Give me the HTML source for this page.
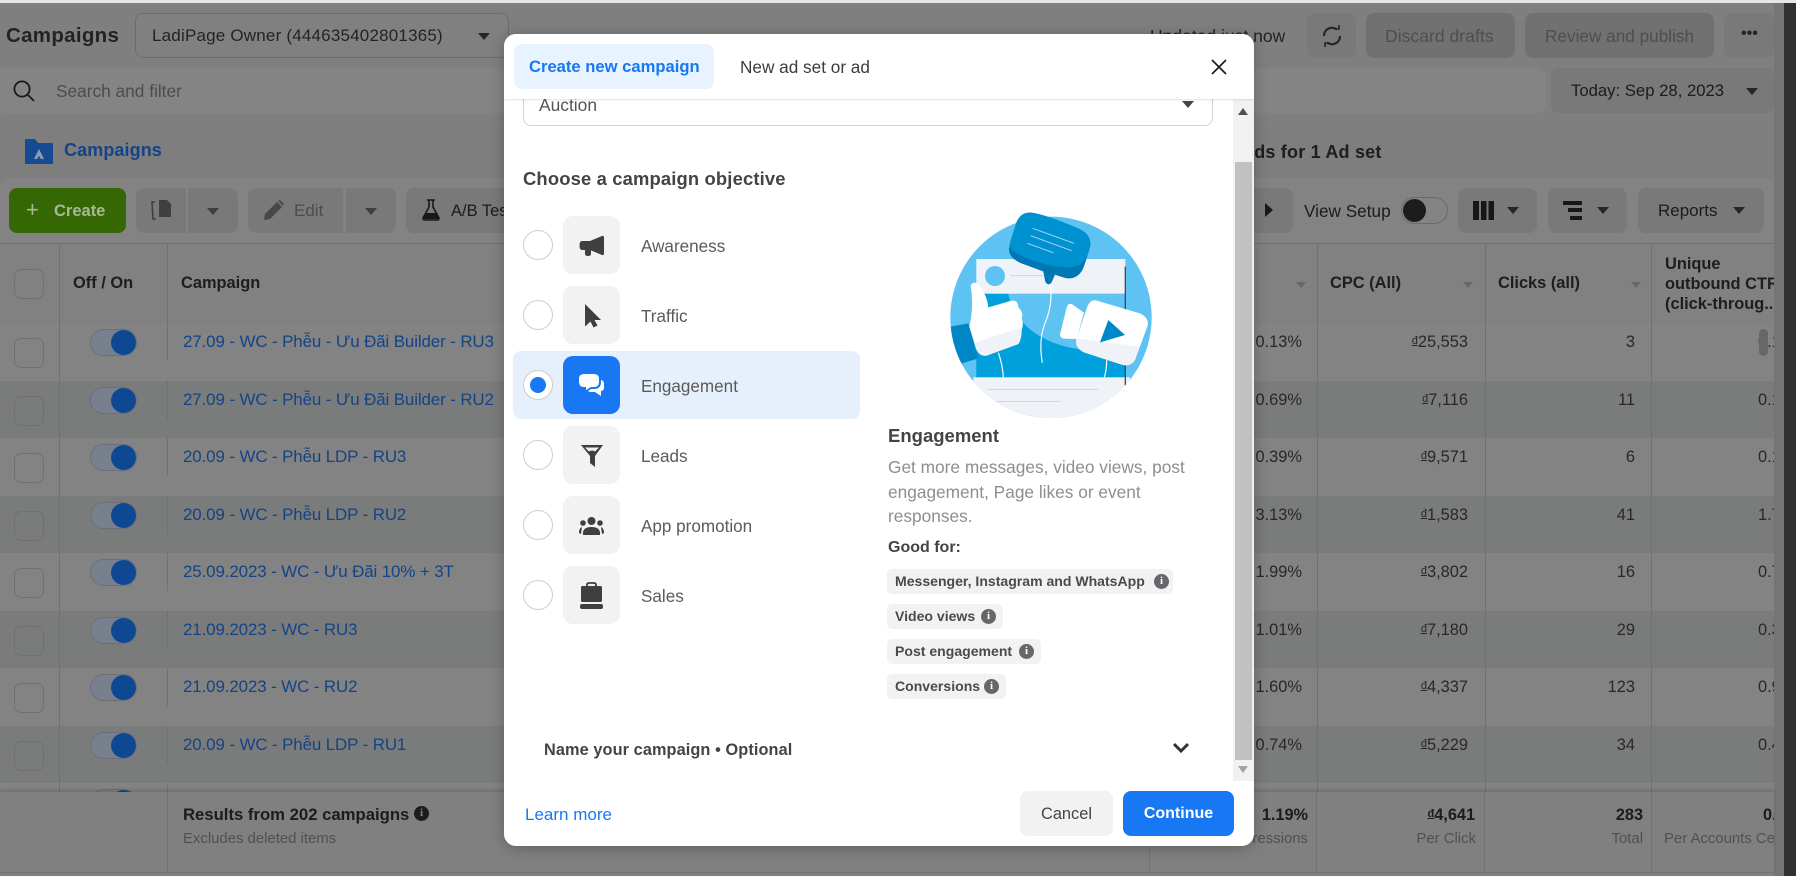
<!DOCTYPE html>
<html><head><meta charset="utf-8"><style>
*{box-sizing:border-box}
html,body{margin:0;padding:0;width:1796px;height:876px;overflow:hidden;background:#969696;font-family:"Liberation Sans","Noto Sans CJK SC",sans-serif}
.t{position:absolute;white-space:nowrap;line-height:20px;height:20px}
.b{position:absolute;border-radius:8px;background:#8f8f8f}
.v{position:absolute;width:1px;background:#858585}
.h{position:absolute;height:1px;background:#858585}
.row{position:absolute;left:0;width:1774px;height:58px;overflow:hidden;font-size:16.4px;color:#2f2f2f}
.l{background:#999a99}.k{background:#909291}
.cb{position:absolute;left:14px;top:15px;width:30px;height:30px;border:1px solid #848484;border-radius:7px}
.tg{position:absolute;left:90px;top:6px;width:47px;height:27px;border-radius:14px;background:#8d97a6;border:1px solid #7c8490}
.tg i{position:absolute;right:0;top:0;width:25px;height:25px;border-radius:50%;background:#1155ad}
.rv{position:absolute;left:167px;top:0;width:1px;height:38px;background:#858585}
.lk{position:absolute;left:183px;top:9px;line-height:20px;font-size:16.9px;color:#184f9e;letter-spacing:-.1px;white-space:nowrap}
.p{position:absolute;right:472px;top:9px;line-height:20px}
.c{position:absolute;right:306px;top:9px;line-height:20px}
.n{position:absolute;right:139px;top:9px;line-height:20px}
.u{position:absolute;left:1758px;top:9px;line-height:20px}
.d{font-size:11px;vertical-align:3px;text-decoration:underline;line-height:0}
.modal{position:absolute;left:504px;top:34px;width:750px;height:812px;background:#fff;border-radius:12px;box-shadow:0 2px 14px rgba(0,0,0,.25);overflow:hidden}
.m{position:absolute;white-space:nowrap;line-height:20px;height:20px}
.radio{position:absolute;left:19px;width:30px;height:30px;border-radius:50%;border:1px solid #cdcdcd;background:#fff}
.tile{position:absolute;left:59px;width:57px;height:58px;border-radius:10px;background:#f2f2f2}
.lab{position:absolute;left:137px;font-size:17.1px;line-height:20px;color:#5b5b5b;height:20px}
.chip{position:absolute;left:383px;height:25px;border-radius:5px;background:#f2f2f2;font-size:14.05px;font-weight:bold;color:#4a4a4a;line-height:25px;padding-left:8px;white-space:nowrap}
.inf{position:absolute;top:5px;width:15px;height:15px;border-radius:50%;background:#65676b;color:#fff;font:bold 11px/15px "Liberation Serif",serif;text-align:center}
.srt{position:absolute;top:282px;width:0;height:0;border-left:5px solid transparent;border-right:5px solid transparent;border-top:6px solid #7a7a7a}
.car{position:absolute;width:0;height:0;border-left:6px solid transparent;border-right:6px solid transparent;border-top:7px solid #2d2d2d}
.th{font-size:16.4px;font-weight:bold;color:#242424;top:273px}
</style></head><body>

<!-- page top -->
<div style="position:absolute;left:1784px;top:3px;width:12px;height:873px;background:#3a3a3a"></div>
<div style="position:absolute;left:1774px;top:3px;width:10px;height:873px;background:#8a8a8a"></div>

<div class="t" style="left:6px;top:26px;font-size:20.5px;font-weight:bold;color:#2a2a2a;letter-spacing:.3px">Campaigns</div>
<div class="b" style="left:135px;top:13px;width:374px;height:45px;background:#979797;border:1px solid #808080"></div>
<div class="t" style="left:152px;top:26px;font-size:17px;color:#2a2a2a;letter-spacing:.2px">LadiPage Owner (444635402801365)</div>
<div class="car" style="left:478px;top:33px"></div>

<div class="t" style="left:1150px;top:26px;font-size:17.5px;color:#2a2a2a">Updated just now</div>
<div class="b" style="left:1307px;top:13px;width:49px;height:45px"></div>
<svg style="position:absolute;left:1320px;top:24px" width="24" height="24" viewBox="0 0 24 24" fill="none" stroke="#2d2d2d" stroke-width="2.2"><path d="M4 12a8 8 0 0 1 13-6.5"/><path d="M20 12a8 8 0 0 1-13 6.5"/><path d="M14 5h5V1" stroke-width="1.6"/><path d="M10 19H5v4" stroke-width="1.6"/></svg>
<div class="b" style="left:1366px;top:13px;width:149px;height:45px;background:#858585"></div>
<div class="t" style="left:1385px;top:26px;font-size:17.6px;color:#5c5c5c">Discard drafts</div>
<div class="b" style="left:1525px;top:13px;width:189px;height:45px;background:#858585"></div>
<div class="t" style="left:1545px;top:26px;font-size:17.2px;color:#5c5c5c">Review and publish</div>
<div class="b" style="left:1724px;top:13px;width:50px;height:45px"></div>
<div class="t" style="left:1741px;top:24px;font-size:16px;font-weight:bold;color:#2d2d2d">•••</div>

<!-- search -->
<div class="b" style="left:-8px;top:68px;width:1554px;height:45px;background:#9c9c9c;border-radius:10px"></div>
<svg style="position:absolute;left:13px;top:80px" width="22" height="22" viewBox="0 0 22 22" fill="none" stroke="#1f1f1f" stroke-width="1.8"><circle cx="9" cy="9" r="7.6"/><path d="M14.5 14.5L21 21"/></svg>
<div class="t" style="left:56px;top:81px;font-size:17.3px;color:#5a5a5a">Search and filter</div>
<div class="b" style="left:1551px;top:68px;width:223px;height:45px"></div>
<div class="t" style="left:1571px;top:81px;font-size:16.7px;color:#222">Today: Sep 28, 2023</div>
<div class="car" style="left:1746px;top:88px"></div>

<!-- tabs -->
<div style="position:absolute;left:9px;top:123px;width:1755px;height:70px;background:#959595;border-radius:10px 10px 0 0"></div>
<svg style="position:absolute;left:25px;top:138px" width="28" height="26" viewBox="0 0 28 26"><path d="M1 1h9l3 4h14a1 1 0 0 1 1 1v19a1 1 0 0 1-1 1H1a1 1 0 0 1-1-1V2a1 1 0 0 1 1-1z" fill="#1a57ad"/><path d="M14 11l5 10h-3l-2-3-2 3H9z" fill="#a7b9d3"/></svg>
<div class="t" style="left:64px;top:140px;font-size:18px;font-weight:bold;color:#184f9e;letter-spacing:.1px">Campaigns</div>
<div class="t" style="left:1241px;top:142px;font-size:18px;font-weight:bold;color:#242424;letter-spacing:.2px">Ads for 1 Ad set</div>

<!-- toolbar -->
<div style="position:absolute;left:0;top:178px;width:1774px;height:66px;background:#9a9a9a;border-radius:10px 10px 0 0"></div>
<div class="b" style="left:9px;top:188px;width:117px;height:45px;background:#3f7a05"></div>
<div class="t" style="left:26px;top:200px;font-size:22px;color:#c6d9b2;font-weight:normal">+</div>
<div class="t" style="left:54px;top:201px;font-size:16.5px;font-weight:bold;color:#c6d9b2">Create</div>
<div class="b" style="left:136px;top:188px;width:50px;height:45px;border-radius:8px 0 0 8px"></div>
<div class="b" style="left:188px;top:188px;width:50px;height:45px;border-radius:0 8px 8px 0"></div>
<svg style="position:absolute;left:150px;top:199px" width="22" height="22" viewBox="0 0 22 22"><path d="M9 1h8l4 4v13H9z" fill="#4a4a4a"/><path d="M5 3H2l1 17h3" fill="none" stroke="#4a4a4a" stroke-width="1.6"/></svg>
<div class="car" style="left:207px;top:208px;border-top-color:#4a4a4a"></div>
<div class="b" style="left:248px;top:188px;width:95px;height:45px;border-radius:8px 0 0 8px"></div>
<div class="b" style="left:346px;top:188px;width:50px;height:45px;border-radius:0 8px 8px 0"></div>
<svg style="position:absolute;left:263px;top:200px" width="21" height="20" viewBox="0 0 21 20"><path d="M1 20l1-6L14 2l5 5L7 19z" fill="#555"/><path d="M15 1l2-1 4 4-1 2z" fill="#555"/></svg>
<div class="t" style="left:294px;top:201px;font-size:17px;color:#5a5a5a">Edit</div>
<div class="car" style="left:365px;top:208px;border-top-color:#4a4a4a"></div>
<div class="b" style="left:406px;top:188px;width:120px;height:45px"></div>
<svg style="position:absolute;left:422px;top:199px" width="18" height="22" viewBox="0 0 18 22"><path d="M5 1h8M7 1v7L1 19q0 2 2 2h12q2 0 2-2L11 8V1" fill="none" stroke="#1d1d1d" stroke-width="1.6"/><path d="M4 14h10l3 6H1z" fill="#1d1d1d"/></svg>
<div class="t" style="left:451px;top:201px;font-size:16.5px;color:#222">A/B Test</div>

<div class="b" style="left:1240px;top:188px;width:53px;height:45px"></div>
<svg style="position:absolute;left:1264px;top:203px" width="10" height="14"><path d="M1 0l8 7-8 7z" fill="#1f1f1f"/></svg>
<div class="t" style="left:1304px;top:201px;font-size:17.2px;color:#222">View Setup</div>
<div style="position:absolute;left:1401px;top:197px;width:47px;height:27px;border-radius:14px;border:1px solid #7d7d7d"></div>
<div style="position:absolute;left:1403px;top:199px;width:23px;height:23px;border-radius:50%;background:#222"></div>
<div class="b" style="left:1458px;top:188px;width:79px;height:45px"></div>
<svg style="position:absolute;left:1473px;top:201px" width="21" height="19"><path d="M0 0h6v19H0zM8 0h5.500v19H8zM15.500 0h5.500v19h-5.500z" fill="#1c1c1c"/></svg>
<div class="car" style="left:1507px;top:207px"></div>
<div class="b" style="left:1548px;top:188px;width:79px;height:45px"></div>
<svg style="position:absolute;left:1563px;top:201px" width="19" height="19"><path d="M0 0h19v4H0zM5 7h14v4H5zM7 15h12v4H7z" fill="#1c1c1c"/></svg>
<div class="car" style="left:1597px;top:207px"></div>
<div class="b" style="left:1638px;top:188px;width:126px;height:45px"></div>
<div class="t" style="left:1658px;top:201px;font-size:17px;color:#222">Reports</div>
<div class="car" style="left:1733px;top:207px"></div>

<!-- header -->
<div style="position:absolute;left:0;top:243px;width:1774px;height:80px;background:#989898"></div>
<div class="h" style="left:0;top:243px;width:1774px"></div>
<div class="h" style="left:0;top:323px;width:1774px"></div>
<div style="position:absolute;left:14px;top:269px;width:30px;height:30px;border:1px solid #848484;border-radius:7px"></div>
<div class="t th" style="left:73px">Off / On</div>
<div class="t th" style="left:181px">Campaign</div>
<div class="t th" style="left:1330px">CPC (All)</div>
<div class="t th" style="left:1498px">Clicks (all)</div>
<div style="position:absolute;left:1665px;top:254px;width:109px;height:60px;overflow:hidden;font-size:16.4px;font-weight:bold;color:#242424;line-height:20px;white-space:nowrap">Unique<br>outbound CTR<br>(click-throug...</div>
<div class="srt" style="left:1296px"></div><div class="srt" style="left:1463px"></div><div class="srt" style="left:1631px"></div>

<!-- rows -->
<div class="row l" style="top:323px"><div class="cb"></div><div class="tg"><i></i></div><div class="rv"></div><div class="lk">27.09 - WC - Phễu - Ưu Đãi Builder - RU3</div><div class="p">0.13%</div><div class="c"><span class="d">đ</span>25,553</div><div class="n">3</div><div class="u">0.1</div><div style="position:absolute;left:1759px;top:6px;width:9px;height:27px;border-radius:5px;background:#797979"></div></div>
<div class="row k" style="top:381px"><div class="cb"></div><div class="tg"><i></i></div><div class="rv"></div><div class="lk">27.09 - WC - Phễu - Ưu Đãi Builder - RU2</div><div class="p">0.69%</div><div class="c"><span class="d">đ</span>7,116</div><div class="n">11</div><div class="u">0.1</div></div>
<div class="row l" style="top:438px"><div class="cb"></div><div class="tg"><i></i></div><div class="rv"></div><div class="lk">20.09 - WC - Phễu LDP - RU3</div><div class="p">0.39%</div><div class="c"><span class="d">đ</span>9,571</div><div class="n">6</div><div class="u">0.1</div></div>
<div class="row k" style="top:496px"><div class="cb"></div><div class="tg"><i></i></div><div class="rv"></div><div class="lk">20.09 - WC - Phễu LDP - RU2</div><div class="p">3.13%</div><div class="c"><span class="d">đ</span>1,583</div><div class="n">41</div><div class="u">1.7</div></div>
<div class="row l" style="top:553px"><div class="cb"></div><div class="tg"><i></i></div><div class="rv"></div><div class="lk">25.09.2023 - WC - Ưu Đãi 10% + 3T</div><div class="p">1.99%</div><div class="c"><span class="d">đ</span>3,802</div><div class="n">16</div><div class="u">0.7</div></div>
<div class="row k" style="top:611px"><div class="cb"></div><div class="tg"><i></i></div><div class="rv"></div><div class="lk">21.09.2023 - WC - RU3</div><div class="p">1.01%</div><div class="c"><span class="d">đ</span>7,180</div><div class="n">29</div><div class="u">0.3</div></div>
<div class="row l" style="top:668px"><div class="cb"></div><div class="tg"><i></i></div><div class="rv"></div><div class="lk">21.09.2023 - WC - RU2</div><div class="p">1.60%</div><div class="c"><span class="d">đ</span>4,337</div><div class="n">123</div><div class="u">0.9</div></div>
<div class="row k" style="top:726px"><div class="cb"></div><div class="tg"><i></i></div><div class="rv"></div><div class="lk">20.09 - WC - Phễu LDP - RU1</div><div class="p">0.74%</div><div class="c"><span class="d">đ</span>5,229</div><div class="n">34</div><div class="u">0.4</div></div>
<div class="row l" style="top:783px"><div class="cb"></div><div class="tg"><i></i></div><div class="rv"></div></div>

<div class="v" style="left:59px;top:243px;height:549px"></div>
<div class="v" style="left:167px;top:243px;height:80px"></div>
<div class="v" style="left:1317px;top:243px;height:549px"></div>
<div class="v" style="left:1485px;top:243px;height:549px"></div>
<div class="v" style="left:1651px;top:243px;height:549px"></div>

<!-- footer -->
<div style="position:absolute;left:0;top:792px;width:1774px;height:80px;background:#979797;box-shadow:0 -2px 3px rgba(0,0,0,.15)"></div>
<div class="h" style="left:0;top:872px;width:1774px"></div>
<div class="v" style="left:167px;top:792px;height:80px"></div>
<div class="v" style="left:1149px;top:792px;height:80px"></div>
<div class="v" style="left:1316px;top:792px;height:80px"></div>
<div class="v" style="left:1484px;top:792px;height:80px"></div>
<div class="v" style="left:1651px;top:792px;height:80px"></div>
<div class="t" style="left:183px;top:805px;font-size:16.7px;font-weight:bold;color:#222">Results from 202 campaigns</div>
<div class="inf" style="left:414px;top:806px;background:#222;color:#9a9a9a">i</div>
<div class="t" style="left:183px;top:829px;font-size:14.9px;color:#5e5e5e">Excludes deleted items</div>
<div class="t" style="right:488px;top:805px;font-size:16.3px;font-weight:bold;color:#222">1.19%</div>
<div class="t" style="right:488px;top:829px;font-size:14.9px;color:#5e5e5e">Per 1,000 Impressions</div>
<div class="t" style="right:321px;top:805px;font-size:16.3px;font-weight:bold;color:#222"><span class="d">đ</span>4,641</div>
<div class="t" style="right:320px;top:829px;font-size:14.9px;color:#5e5e5e">Per Click</div>
<div class="t" style="right:153px;top:805px;font-size:16.3px;font-weight:bold;color:#222">283</div>
<div class="t" style="right:153px;top:829px;font-size:14.9px;color:#5e5e5e">Total</div>
<div class="t" style="left:1664px;width:110px;overflow:hidden;top:829px;font-size:14.9px;color:#5e5e5e">Per Accounts Center</div>
<div class="t" style="left:1763px;width:11px;overflow:hidden;top:805px;font-size:16.3px;font-weight:bold;color:#222">0.</div>

<!-- dim -->
<div style="position:absolute;left:0;top:0;width:1796px;height:876px;background:rgba(0,0,0,.15)"></div>
<div style="position:absolute;left:0;top:0;width:1796px;height:3px;background:#e6e6e6"></div>

<!-- modal -->
<div class="modal">
  <!-- select -->
  <div style="position:absolute;left:19px;top:30px;width:690px;height:62px;border:1px solid #d3d3d3;border-radius:8px"></div>
  <div class="m" style="left:35px;top:61px;font-size:17.4px;color:#555">Auction</div>
  <div class="car" style="left:678px;top:67px;border-top-color:#444"></div>

  <div class="m" style="left:19px;top:135px;font-size:18.4px;font-weight:bold;color:#444;letter-spacing:.15px">Choose a campaign objective</div>

  <div style="position:absolute;left:9px;top:317px;width:347px;height:68px;background:#e6f0fc;border-radius:8px"></div>

  <div class="radio" style="top:196px"></div>
  <div class="radio" style="top:266px"></div>
  <div class="radio" style="top:336px"></div>
  <div style="position:absolute;left:26px;top:343px;width:16px;height:16px;border-radius:50%;background:#1877f2"></div>
  <div class="radio" style="top:406px"></div>
  <div class="radio" style="top:476px"></div>
  <div class="radio" style="top:546px"></div>

  <div class="tile" style="top:182px"><svg width="57" height="58" viewBox="0 0 57 58"><path d="M19 25h8l12-5q2-.7 2 1.500v16q0 2.200-2 1.500l-12-5h-8q-2.500 0-2.500-4.500t2.500-4.500z" fill="#3f3f3f"/><path d="M22 34h6v4q0 2-3 2t-3-2z" fill="#3f3f3f"/></svg></div>
  <div class="tile" style="top:252px"><svg width="57" height="58" viewBox="0 0 57 58"><path d="M22 18l16 16h-6.500l3 5.500-4 2-3-6-5.500 5z" fill="#3f3f3f"/></svg></div>
  <div class="tile" style="top:322px;background:#1877f2"><svg width="57" height="58" viewBox="0 0 57 58"><path d="M21 18h10q5 0 5 5v3q0 5-5 5h-3l-5 3v-3h-2q-5 0-5-5v-3q0-5 5-5z" fill="#fff"/><path d="M38 24q3 .5 3 4v3q0 4-3 4v5l-6-4h-4q-2 0-3-1l3-2h3q7 0 7-7z" fill="#fff"/></svg></div>
  <div class="tile" style="top:392px"><svg width="57" height="58" viewBox="0 0 57 58"><path d="M18 19h22l-8 11v11l-5-4v-7z" fill="#3f3f3f"/><path d="M22 21.500h14l-4 4q-3-2-6 0z" fill="#f2f2f2"/></svg></div>
  <div class="tile" style="top:462px"><svg width="57" height="58" viewBox="0 0 57 58"><circle cx="28.500" cy="25" r="4" fill="#3f3f3f"/><circle cx="20" cy="27" r="2.800" fill="#3f3f3f"/><circle cx="37" cy="27" r="2.800" fill="#3f3f3f"/><path d="M20 39q-1-8 8.500-8t8.500 8z" fill="#3f3f3f"/><path d="M16 37q0-5 3-6l-1 7zM41 37q0-5-3-6l1 7z" fill="#3f3f3f"/></svg></div>
  <div class="tile" style="top:532px"><svg width="57" height="58" viewBox="0 0 57 58"><path d="M24 21v-2q0-2 2-2h5q2 0 2 2v2" fill="none" stroke="#3f3f3f" stroke-width="1.800"/><rect x="18" y="20" width="21" height="16" rx="1.500" fill="#3f3f3f"/><rect x="17" y="38" width="23" height="5" rx="2" fill="#3f3f3f"/></svg></div>

  <div class="lab" style="top:203px">Awareness</div>
  <div class="lab" style="top:273px">Traffic</div>
  <div class="lab" style="top:343px">Engagement</div>
  <div class="lab" style="top:413px">Leads</div>
  <div class="lab" style="top:483px">App promotion</div>
  <div class="lab" style="top:553px">Sales</div>

  <!-- illustration -->
  <svg style="position:absolute;left:376px;top:156px" width="380" height="300" viewBox="0 0 1140 900">
    <defs><clipPath id="cc"><circle cx="513" cy="382" r="302"/></clipPath></defs>
    <circle cx="513" cy="382" r="302" fill="#5ec3f2"/>
    <g clip-path="url(#cc)">
      <path d="M289 311H385C400 390 470 460 600 478L736 500V562H289Z" fill="#00a0dc"/>
      <rect x="289" y="207" width="447" height="104" fill="#eff3f7"/>
      <rect x="280" y="562" width="470" height="130" fill="#eff3f7"/>
      <path d="M322 598H655M350 634H542M392 257H490" stroke="#d0d5da" stroke-width="3" fill="none"/>
      <rect x="734" y="230" width="4" height="356" fill="#3f4a55"/>
      <path d="M200 412L265 400L295 505L230 525Z" fill="#0086c4"/>
    </g>
    <circle cx="345" cy="258" r="30" fill="#5ec3f2"/>
    <path d="M355 488Q368 525 370 562M510 285Q520 340 495 400Q475 450 487 518M680 510Q680 540 673 562" stroke="#fff" stroke-width="3.500" fill="none"/>
    <path d="M272 285Q285 268 302 292Q322 320 325 352L395 332Q415 330 415 352Q432 368 425 385Q432 402 425 420Q425 448 415 462L320 497Q300 500 290 480L268 410Q282 350 272 285Z" fill="#fff"/>
    <path d="M285 458L425 412Q425 448 415 462L320 497Q300 500 290 480Z" fill="#eff3f7"/>
    <path d="M455 68C490 72 560 100 595 115C625 128 638 150 628 180L612 228C600 262 575 270 550 262L525 254L514 278C505 288 497 280 495 270L490 244L425 220C395 208 382 185 390 158L408 100C416 78 432 65 455 68Z" fill="#0091d0"/>
    <path d="M388 172C420 205 500 230 560 232C590 233 610 222 622 198L612 228C600 262 575 270 550 262L525 254L514 278C505 288 497 280 495 270L490 244L425 220C395 208 384 190 388 172Z" fill="#0076b3"/>
    <path d="M458 115L582 160M452 137L575 182M442 160L520 188" stroke="#a5d9f1" stroke-width="3"/>
    <path d="M575 342L612 368L590 447L550 446Q536 442 542 425L560 352Q565 338 575 342Z" fill="#fff"/>
    <path d="M650 332L780 370Q810 385 802 410L765 510Q750 532 725 524L612 487Q582 472 590 445L622 350Q632 326 650 332Z" fill="#fff"/>
    <path d="M590 445L778 470L765 510Q750 532 725 524L612 487Q582 472 590 445Z" fill="#eff3f7"/>
    <path d="M685 390L735 435L660 457Z" fill="#0088c9"/>
  </svg>

  <div class="m" style="left:384px;top:392px;font-size:18.5px;font-weight:bold;color:#444">Engagement</div>
  <div style="position:absolute;left:384px;top:421px;font-size:17.3px;line-height:24.600px;color:#8e8e8e;white-space:nowrap">Get more messages, video views, post<br>engagement, Page likes or event<br>responses.</div>
  <div class="m" style="left:384px;top:504px;font-size:16px;font-weight:bold;color:#444">Good for:</div>

  <div class="chip" style="top:535px;width:286px">Messenger, Instagram and WhatsApp<span class="inf" style="left:267px">i</span></div>
  <div class="chip" style="top:570px;width:116px">Video views<span class="inf" style="left:94px">i</span></div>
  <div class="chip" style="top:605px;width:154px">Post engagement<span class="inf" style="left:132px">i</span></div>
  <div class="chip" style="top:640px;width:119px">Conversions<span class="inf" style="left:97px">i</span></div>

  <div class="m" style="left:40px;top:706px;font-size:16.3px;font-weight:bold;color:#444;letter-spacing:.1px">Name your campaign • Optional</div>
  <svg style="position:absolute;left:668px;top:708px" width="18" height="12"><path d="M2 2l7 7 7-7" fill="none" stroke="#333" stroke-width="3"/></svg>

  <!-- scrollbar -->
  <div style="position:absolute;left:729px;top:65px;width:21px;height:682px;background:#f1f1f1"></div>
  <div style="position:absolute;left:731px;top:128px;width:17px;height:598px;background:#c1c1c1"></div>
  <svg style="position:absolute;left:734px;top:74px" width="10" height="7"><path d="M5 0l5 7H0z" fill="#505050"/></svg>
  <svg style="position:absolute;left:734px;top:732px" width="10" height="7"><path d="M5 7l5-7H0z" fill="#a3a3a3"/></svg>

  <!-- header -->
  <div style="position:absolute;left:0;top:0;width:750px;height:65px;background:#fff;box-shadow:0 1px 2px rgba(0,0,0,.12)"></div>
  <div style="position:absolute;left:10px;top:10px;width:200px;height:45px;background:#e7f3ff;border-radius:8px"></div>
  <div class="m" style="left:25px;top:23px;font-size:16.6px;font-weight:bold;color:#1877f2">Create new campaign</div>
  <div class="m" style="left:236px;top:23px;font-size:17.2px;color:#3c3c3c">New ad set or ad</div>
  <svg style="position:absolute;left:707px;top:25px" width="16" height="16"><path d="M1 1l14 14M15 1L1 15" stroke="#1c1c1c" stroke-width="1.700"/></svg>

  <!-- footer -->
  <div class="m" style="left:21px;top:771px;font-size:17px;color:#1877f2">Learn more</div>
  <div style="position:absolute;left:516px;top:757px;width:93px;height:45px;border-radius:8px;background:#f2f2f2;text-align:center;font-size:16.4px;line-height:46px;color:#444">Cancel</div>
  <div style="position:absolute;left:619px;top:757px;width:111px;height:45px;border-radius:8px;background:#1877f2;text-align:center;font-size:16px;font-weight:bold;line-height:46px;color:#fff">Continue</div>
</div>
</body></html>
